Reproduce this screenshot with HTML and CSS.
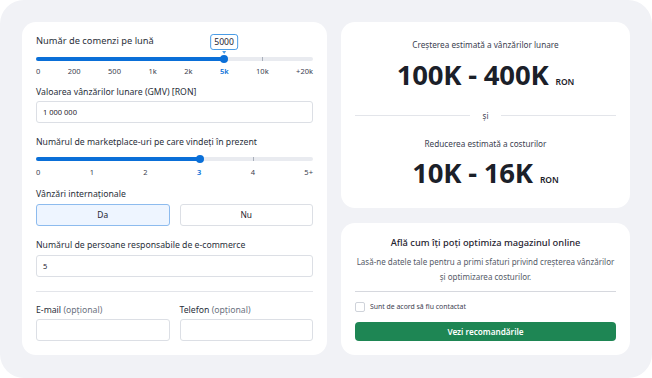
FILE: index.html
```html
<!DOCTYPE html>
<html lang="ro">
<head>
<meta charset="utf-8">
<link rel="stylesheet" href="styles.css">
</head>
<body>
<div class="frame">
  <div class="card form">
    <div class="label first">Număr de comenzi pe lună</div>
    <div class="slider">
      <div class="track">
        <div class="fill" style="width:67.9%"></div>
        <div class="tick" style="left:81.6%"></div>
        <div class="thumb" style="left:67.9%">
          <div class="tip">5000</div>
        </div>
      </div>
      <div class="ticks">
        <span>0</span><span>200</span><span>500</span><span>1k</span><span>2k</span><span class="on">5k</span><span>10k</span><span>+20k</span>
      </div>
    </div>

    <div class="label gap">Valoarea vânzărilor lunare (GMV) [RON]</div>
    <div class="input">1 000 000</div>

    <div class="label gap2">Numărul de marketplace-uri pe care vindeți în prezent</div>
    <div class="slider s2">
      <div class="track">
        <div class="fill" style="width:59.2%"></div>
        <div class="tick" style="left:78.3%"></div>
        <div class="thumb" style="left:59.2%"></div>
      </div>
      <div class="ticks">
        <span>0</span><span>1</span><span>2</span><span class="on">3</span><span>4</span><span>5+</span>
      </div>
    </div>

    <div class="label gap4">Vânzări internaționale</div>
    <div class="choices">
      <div class="choice active">Da</div>
      <div class="choice">Nu</div>
    </div>

    <div class="label gap3">Numărul de persoane responsabile de e-commerce</div>
    <div class="input mid">5</div>

    <div class="rule"></div>

    <div class="contact">
      <div class="field">
        <div class="label">E-mail <span class="muted">(opțional)</span></div>
        <div class="input"></div>
      </div>
      <div class="field">
        <div class="label">Telefon <span class="muted">(opțional)</span></div>
        <div class="input"></div>
      </div>
    </div>
  </div>

  <div class="side">
    <div class="card results">
      <div class="caption">Creșterea estimată a vânzărilor lunare</div>
      <div class="big">100K - 400K <small>RON</small></div>
      <div class="sep"><span>și</span></div>
      <div class="caption">Reducerea estimată a costurilor</div>
      <div class="big">10K - 16K <small>RON</small></div>
    </div>
    <div class="card cta">
      <div class="cta-title">Află cum îți poți optimiza magazinul online</div>
      <div class="cta-text">Lasă-ne datele tale pentru a primi sfaturi privind creșterea vânzărilor<br>și optimizarea costurilor.</div>
      <div class="rule2"></div>
      <label class="check"><span class="box"></span>Sunt de acord să fiu contactat</label>
      <div class="btn">Vezi recomandările</div>
    </div>
  </div>
</div>
</body>
</html>
```

FILE: styles.css
```css
* { box-sizing: border-box; }
html, body { margin: 0; padding: 0; background: #fff; }
body {
  font-family: "Noto Sans", "Open Sans", sans-serif;
  color: #1f2430;
  width: 652px;
  height: 378px;
}
.frame {
  width: 652px;
  height: 378px;
  background: #f1f2f6;
  border-radius: 24px;
  padding: 22px;
  display: grid;
  grid-template-columns: 305px 289px;
  grid-template-rows: 333px;
  column-gap: 14px;
}
.card {
  background: #fff;
  border-radius: 14px;
}
.form {
  padding: 12px 14px 14px;
  display: flex;
  flex-direction: column;
}
.label {
  font-size: 8.7px;
  line-height: 14px;
  color: #2a2f3a;
  white-space: nowrap;
}
.label.first { font-size: 9.3px; }
.muted { color: #6b7280; }
.gap { margin-top: 9px; }
.gap2 { margin-top: 12px; }
.gap3 { margin-top: 12px; }
.gap4 { margin-top: 10px; }

.slider { margin-top: 9px; }
.track {
  position: relative;
  height: 4px;
  background: #e9ebf0;
  border-radius: 2px;
}
.fill {
  height: 4px;
  background: #0a6fd8;
  border-radius: 2px;
}
.tick {
  position: absolute;
  top: 0;
  width: 1px;
  height: 4px;
  background: #aab0bb;
}
.thumb {
  position: absolute;
  top: -2px;
  width: 8px;
  height: 8px;
  margin-left: -4px;
  border-radius: 50%;
  background: #0a6fd8;
}
.tip {
  position: absolute;
  bottom: 13px;
  left: 50%;
  transform: translateX(-50%);
  border: 1px solid #4a9ce6;
  background: #fff;
  border-radius: 3px;
  font-size: 8.6px;
  line-height: 12px;
  padding: 1px 3px;
  color: #1f2430;
}
.tip::after {
  content: "";
  position: absolute;
  left: 50%;
  top: 100%;
  margin-left: -2px;
  margin-top: 2px;
  border: 2px solid transparent;
  border-top: 3px solid #4a9ce6;
}
.ticks {
  display: flex;
  justify-content: space-between;
  margin-top: 5px;
  font-size: 7.5px;
  line-height: 10px;
  color: #3b4150;
}
.ticks .on { color: #0a6fd8; font-weight: 600; }
.s2 { margin-top: 8px; }
.s2 .ticks { margin-top: 6px; }

.input {
  margin-top: 2px;
  height: 22px;
  border: 1px solid #dcdfe5;
  border-radius: 3px;
  font-size: 7.5px;
  line-height: 20px;
  padding: 0 6px;
  color: #1f2430;
}
.input.mid { margin-top: 3px; }
.choices {
  margin-top: 3px;
  display: grid;
  grid-template-columns: 1fr 1fr;
  column-gap: 10px;
}
.choice {
  height: 22px;
  border: 1px solid #dcdfe5;
  border-radius: 3px;
  font-size: 8.4px;
  line-height: 20px;
  text-align: center;
}
.choice.active {
  background: #eef5ff;
  border-color: #8dbbee;
}
.rule {
  margin-top: 14px;
  height: 1px;
  background: #e3e5ea;
}
.contact {
  margin-top: 11px;
  display: grid;
  grid-template-columns: 1fr 1fr;
  column-gap: 10px;
}
.contact .input { margin-top: 2px; }

.side {
  display: grid;
  grid-template-rows: 186px 132px;
  row-gap: 15px;
}
.results {
  padding: 16px 14px 0;
  text-align: center;
}
.caption {
  font-size: 8.2px;
  line-height: 14px;
  color: #3b4150;
}
.big {
  margin-top: 5.5px;
  font-size: 27.5px;
  line-height: 34px;
  font-weight: 700;
  color: #1b2029;
  letter-spacing: -0.2px;
}
.big small {
  font-size: 8.5px;
  line-height: 1;
  font-weight: 600;
  letter-spacing: 0;
}
.sep {
  margin: 18px 0 15px;
  display: flex;
  align-items: center;
  gap: 13px;
  font-size: 8px;
  line-height: 12px;
  color: #3b4150;
}
.sep::before, .sep::after {
  content: "";
  flex: 1;
  height: 1px;
  background: #e3e5ea;
}
.cta {
  padding: 13px 14px 0;
  text-align: center;
}
.cta-title {
  font-size: 9.3px;
  line-height: 14px;
  font-weight: 500;
  color: #1f2430;
}
.cta-text {
  margin-top: 3.5px;
  font-size: 8px;
  line-height: 15px;
  color: #555b68;
  white-space: nowrap;
}
.rule2 {
  margin-top: 7.5px;
  height: 1px;
  background: #d6d8de;
}
.check {
  display: flex;
  align-items: center;
  gap: 5px;
  margin-top: 10px;
  height: 10px;
  font-size: 6.9px;
  line-height: 10px;
  color: #3b4150;
  text-align: left;
}
.box {
  width: 10px;
  height: 10px;
  border: 1px solid #cfd3da;
  border-radius: 2px;
}
.btn {
  margin-top: 10px;
  height: 19px;
  border-radius: 4px;
  background: #1e8654;
  color: #fff;
  font-size: 8.2px;
  font-weight: 600;
  line-height: 19px;
}
```
